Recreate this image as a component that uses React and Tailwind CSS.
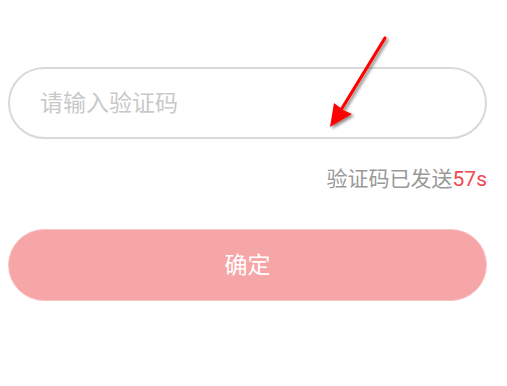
import React, { useState } from 'react';

const font = { fontFamily: '"Roboto", "Noto Sans CJK SC", sans-serif' };

const Arrow = () => (
  <svg className="absolute left-0 top-0 pointer-events-none" width="507" height="386" viewBox="0 0 507 386">
    <defs>
      <filter id="sh" x="-50%" y="-50%" width="200%" height="200%">
        <feDropShadow dx="2" dy="2" stdDeviation="1.5" floodColor="#000" floodOpacity="0.45" />
      </filter>
    </defs>
    <g filter="url(#sh)">
      <line x1="385" y1="38" x2="341" y2="110" stroke="#ff0000" strokeWidth="3.2" strokeLinecap="round" />
      <polygon points="330,127 334,103 343,110 352,114" fill="#ff0000" />
    </g>
  </svg>
);

const App = () => {
  const [code, setCode] = useState('');

  return (
    <div className="relative w-[507px] h-[386px] bg-white overflow-hidden" style={font}>
      <div className="pl-2 pr-5 pt-[67px]">
        <input
          value={code}
          onChange={(e) => setCode(e.target.value)}
          placeholder="请输入验证码"
          className="w-full h-[72px] rounded-full border-2 border-[#d9d9d9] pl-[30px] text-[23px] text-gray-700 outline-none placeholder:text-[#c9c9c9]"
          style={font}
        />
        <div className="mt-[27px] text-right text-[21px] leading-[27px] text-[#999999]">
          验证码已发送<span className="text-[#f2474f]">57s</span>
        </div>
        <button
          type="button"
          className="mt-[36px] w-full h-[72px] rounded-full border border-[#f9c4c5] bg-[#f7a6a8] pt-[3px] text-white text-[23px]"
          style={font}
        >
          确定
        </button>
      </div>
      <Arrow />
    </div>
  );
};

export default App;
